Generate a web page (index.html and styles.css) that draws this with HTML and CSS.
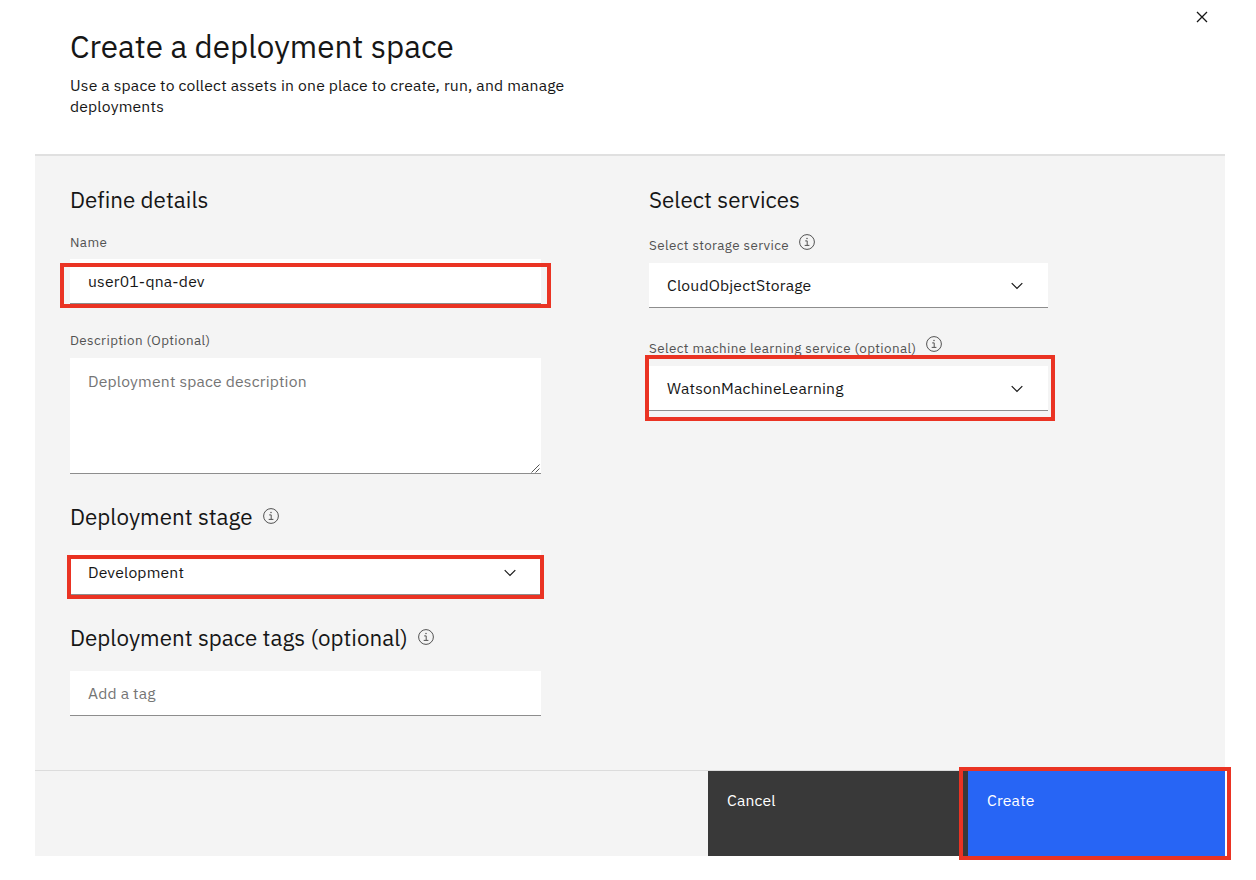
FILE: index.html
```
<!DOCTYPE html>
<html lang="en">
<head>
<meta charset="utf-8">
<title>Create a deployment space</title>
<link rel="stylesheet" href="styles.css">
</head>
<body>
<svg class="sprite" width="0" height="0">
  <symbol id="info" viewBox="0 0 16 16"><circle cx="8" cy="8" r="7.4" fill="none" stroke="currentColor" stroke-width="1"/><path d="M6.2 6.9h2v4.4M5.7 11.4h4.7" fill="none" stroke="currentColor" stroke-width="1"/><circle cx="8" cy="4.5" r=".75" fill="currentColor"/></symbol>
  <symbol id="chevron" viewBox="0 0 12 8"><path d="M.7 1.2 6 6.5l5.3-5.3" fill="none" stroke="currentColor" stroke-width="1.2"/></symbol>
</svg>
<main class="dialog">
  <header class="header">
    <div>
      <h1 class="title">Create a deployment space</h1>
      <p class="subtitle">Use a space to collect assets in one place to create, run, and manage<br>deployments</p>
    </div>
    <svg class="close" viewBox="0 0 12 12"><path d="M1 1l10 10M11 1 1 11" stroke="currentColor" stroke-width="1.3"/></svg>
  </header>
  <section class="panel">
    <div class="column details">
      <h2 class="heading">Define details</h2>
      <div class="label name-label">Name</div>
      <div class="field name-field">user01-qna-dev</div>
      <div class="label desc-label">Description (Optional)</div>
      <div class="field area">Deployment space description
        <svg class="grip" viewBox="0 0 9 9"><path d="M.5 8.5l8-8M4.5 8.5l4-4" stroke="#555" stroke-width="1"/></svg>
      </div>
      <h2 class="heading stage-heading">Deployment stage<svg class="info"><use href="#info"/></svg></h2>
      <div class="field stage-field">Development<svg class="chevron"><use href="#chevron"/></svg></div>
      <h2 class="heading tags-heading">Deployment space tags (optional)<svg class="info"><use href="#info"/></svg></h2>
      <div class="field tag-field">Add a tag</div>
    </div>
    <div class="column services">
      <h2 class="heading">Select services</h2>
      <div class="label storage-label">Select storage service<svg class="info"><use href="#info"/></svg></div>
      <div class="field">CloudObjectStorage<svg class="chevron"><use href="#chevron"/></svg></div>
      <div class="label ml-label">Select machine learning service (optional)<svg class="info"><use href="#info"/></svg></div>
      <div class="field">WatsonMachineLearning<svg class="chevron"><use href="#chevron"/></svg></div>
    </div>
  </section>
  <footer class="footer">
    <div class="button cancel">Cancel</div>
    <div class="button create">Create</div>
  </footer>
</main>
<div class="mark mark-name"></div>
<div class="mark mark-stage"></div>
<div class="mark mark-ml"></div>
<div class="mark mark-create"></div>
</body>
</html>
```
FILE: styles.css
```
* { box-sizing: border-box; }
body { margin: 0; height: 880px; position: relative; overflow: hidden; background: #fff; color: #161616; font-family: "IBM Plex Sans", Roboto, sans-serif; font-size: 15.7px; letter-spacing: .18px; }
h1, h2, p { margin: 0; font-weight: 400; }
.sprite { position: absolute; }
.dialog { width: 1190px; margin-left: 35px; }
.header { height: 156px; padding: 27px 17.5px 0 35px; display: flex; justify-content: space-between; border-bottom: 2px solid #e0e0e0; }
.title { font-size: 31.4px; line-height: 40px; letter-spacing: 0; }
.subtitle { margin-top: 8px; line-height: 21.4px; }
.close { width: 12px; height: 12px; margin-top: -16.5px; }
.panel { height: 614px; padding: 29px 35px 0; display: flex; gap: 108px; background: #f4f4f4; }
.details { width: 471px; }
.services { width: 399px; }
.heading { display: flex; align-items: center; height: 30px; font-size: 22.4px; line-height: 30px; letter-spacing: .02px; }
.label { display: flex; align-items: center; height: 18px; font-size: 13.4px; line-height: 18px; letter-spacing: .38px; color: #525252; }
.field { position: relative; display: flex; align-items: center; height: 45px; padding: 0 25.5px 0 18px; background: #fff; border-bottom: 1px solid #8d8d8d; line-height: 22px; }
.info { width: 16px; height: 16px; margin-left: 10px; color: #525252; }
.chevron { width: 12px; height: 8px; margin-left: auto; margin-top: 1px; }
.name-label { margin-top: 18px; }
.name-field { margin-top: 8px; }
.desc-label { margin-top: 27px; }
.area { height: 116px; margin-top: 9px; padding-top: 12px; align-items: flex-start; color: #757575; }
.grip { position: absolute; right: 1px; bottom: 0; width: 9px; height: 9px; }
.stage-heading { margin-top: 28px; }
.stage-field { margin-top: 18px; }
.tags-heading { margin-top: 28px; }
.tag-field { margin-top: 18px; color: #757575; }
.storage-label { margin-top: 21px; margin-bottom: 9px; }
.ml-label { margin-top: 31px; margin-bottom: 9px; }
.heading .info { margin-bottom: 2px; }
.label .info { margin-bottom: 7px; }
.ml-label .info { margin-bottom: 8px; }
.footer { height: 86px; display: flex; justify-content: flex-end; background: #f4f4f4; border-top: 1px solid #dcdcdc; }
.button { padding: 17.5px 19px; line-height: 22px; color: #fff; }
.cancel { width: 260px; background: #393939; }
.create { width: 257px; background: #2765f5; }
.mark { position: absolute; border: 4px solid #ea3323; }
.mark-name { left: 60px; top: 263px; width: 491px; height: 45px; }
.mark-stage { left: 67px; top: 555px; width: 477px; height: 44px; }
.mark-ml { left: 645px; top: 355px; width: 410px; height: 66px; }
.mark-create { left: 959px; top: 767px; width: 272px; height: 93px; }
```
